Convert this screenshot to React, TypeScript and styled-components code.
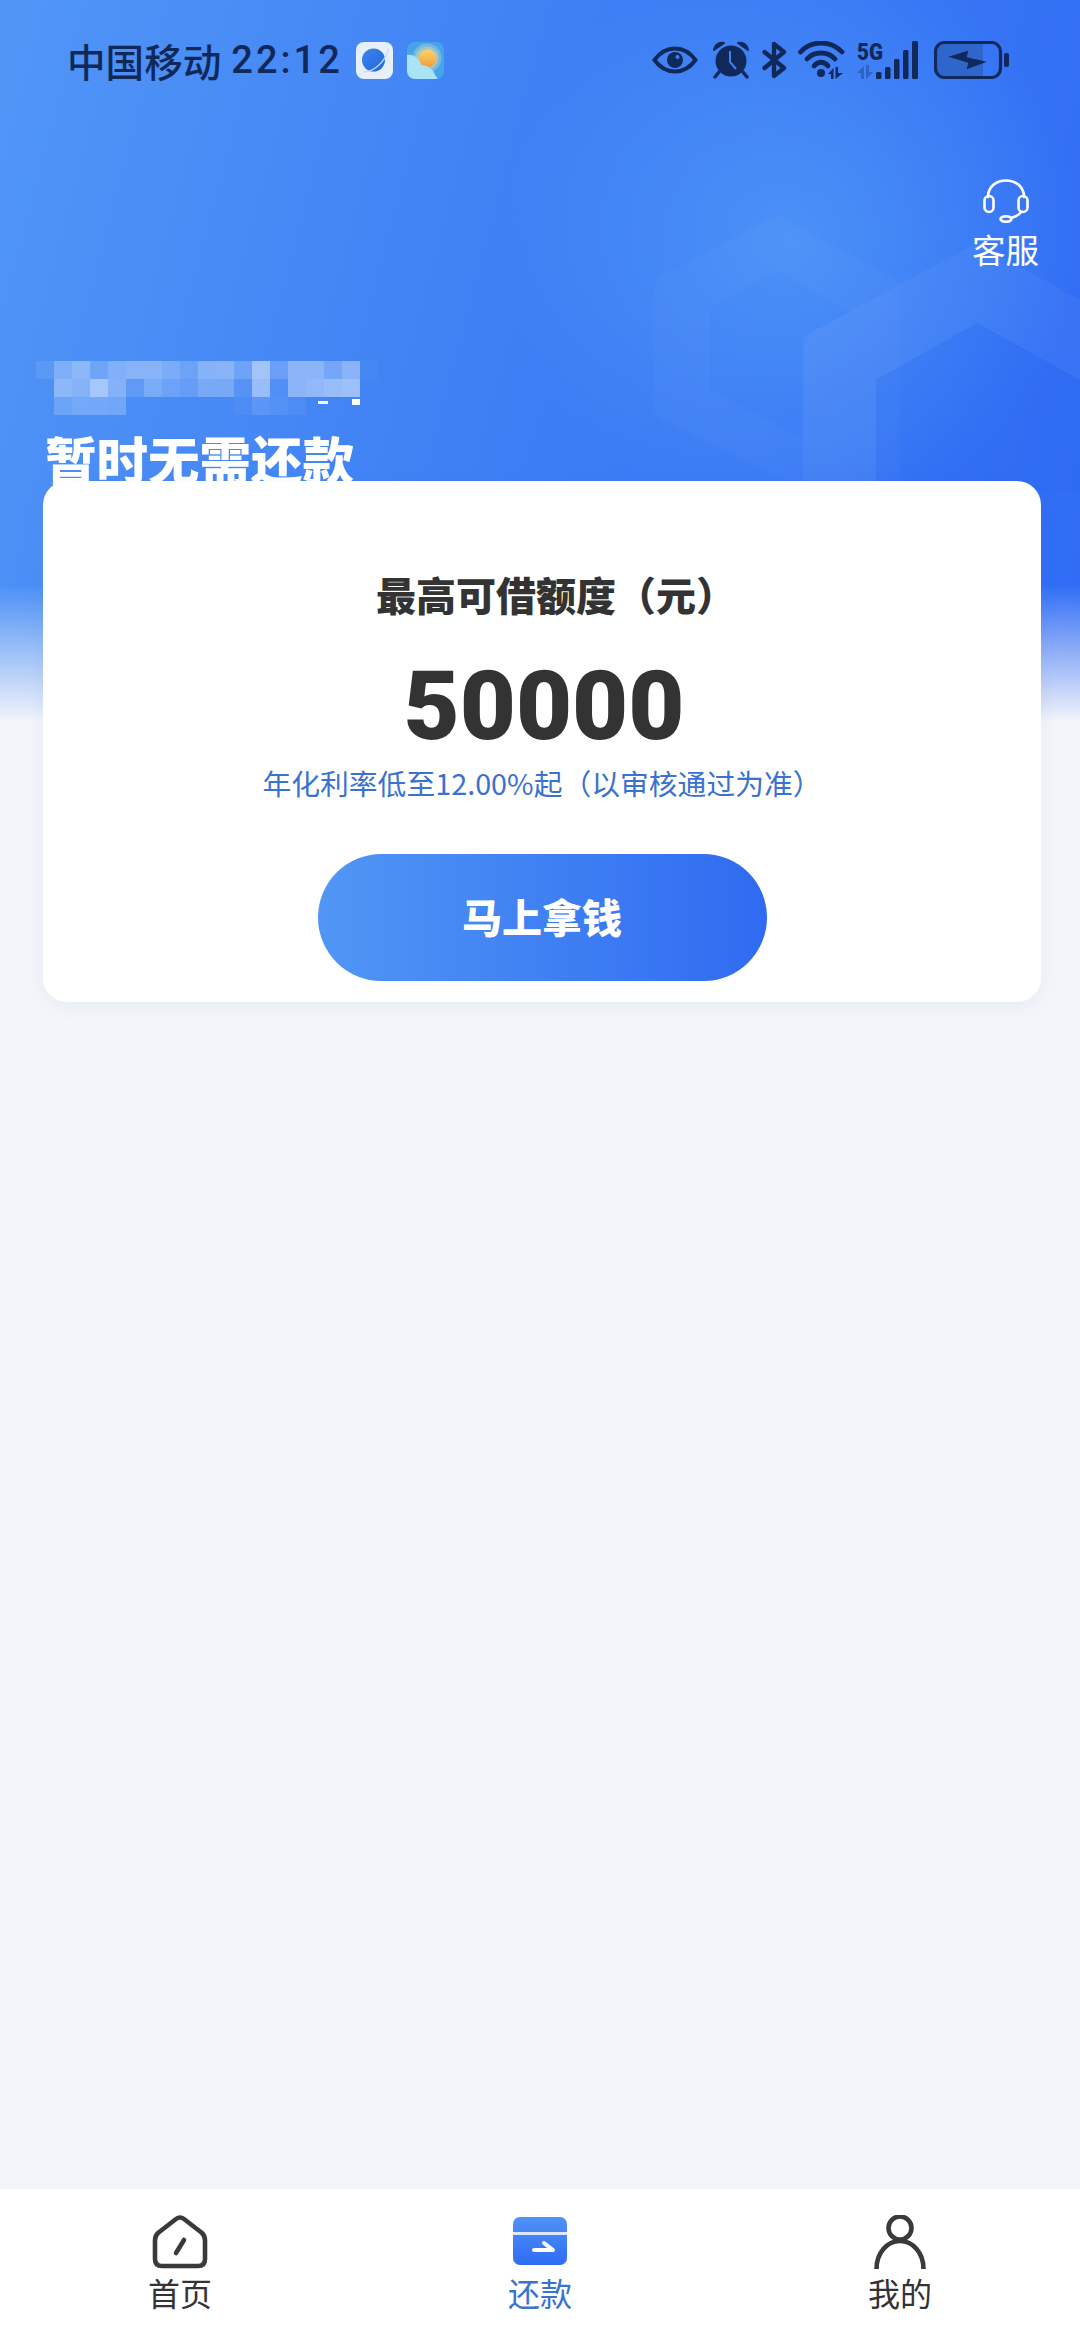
import React, { FunctionComponent } from "react";
import styled, { createGlobalStyle } from "styled-components";

const INK = "#10295a";
const BLUE_TEXT = "#3a72d0";
const CJK = `"Noto Sans CJK SC", "Noto Sans", sans-serif`;

const GlobalStyle = createGlobalStyle`
  html, body {
    margin: 0;
    padding: 0;
    background: #f3f5fa;
  }
  * {
    box-sizing: border-box;
  }
`;

const Page = styled.div`
  position: relative;
  width: 1080px;
  height: 2340px;
  overflow: hidden;
  display: flex;
  flex-direction: column;
  background: #f3f5fa;
  font-family: ${CJK};
`;

const HeroBackdrop = styled.div`
  position: absolute;
  top: 0;
  left: 0;
  width: 1080px;
  height: 740px;
  background:
    radial-gradient(circle at 790px 240px, rgba(80, 152, 248, 0.8) 0, rgba(80, 152, 248, 0) 290px),
    linear-gradient(105deg, #5196f7 0%, #3f80f4 45%, #2f6bf5 100%);
  -webkit-mask-image: linear-gradient(#000 585px, transparent 722px);
  mask-image: linear-gradient(#000 585px, transparent 722px);
`;

const HexArt = styled.svg`
  position: absolute;
  top: 0;
  left: 0;
`;

const StatusBar = styled.div`
  position: relative;
  height: 120px;
  flex: none;
  display: flex;
  align-items: center;
  justify-content: space-between;
  padding: 0 70px 0 67px;
  color: ${INK};
`;

const StatusLeft = styled.div`
  display: flex;
  align-items: center;
`;

const Carrier = styled.span`
  font-size: 38.6px;
  font-weight: 500;
  line-height: 44px;
`;

const Clock = styled.span`
  font-family: Roboto, sans-serif;
  font-size: 38px;
  font-weight: 500;
  letter-spacing: 3px;
  line-height: 44px;
  margin-left: 10px;
  margin-right: 13px;
`;

const AppBadges = styled.div`
  display: flex;
  gap: 14px;
`;

const StatusRight = styled.div`
  display: flex;
  align-items: center;
`;

const StatusIcon = styled.svg<{ $gap?: number }>`
  display: block;
  margin-left: ${(p) => p.$gap ?? 0}px;
`;

const ServiceLink = styled.div`
  position: relative;
  align-self: flex-end;
  margin: 58px 41px 0 0;
  display: flex;
  flex-direction: column;
  align-items: center;
  gap: 6px;
  color: #fff;
  font-size: 33.5px;
  line-height: 40px;
`;

const NameMosaic = styled.div`
  position: relative;
  margin: 92px 0 0 36px;
  display: grid;
  grid-template-columns: repeat(19, 18px);
  grid-auto-rows: 18px;
  width: 342px;
`;

const MosaicCell = styled.div<{ $alpha: number }>`
  background: rgba(255, 255, 255, ${(p) => p.$alpha});
`;

const MosaicFleck = styled.div<{ $left: number; $top: number; $w: number; $h: number }>`
  position: absolute;
  left: ${(p) => p.$left}px;
  top: ${(p) => p.$top}px;
  width: ${(p) => p.$w}px;
  height: ${(p) => p.$h}px;
  background: #fff;
`;

const RepayTitle = styled.h1`
  position: relative;
  margin: 13px 0 0 45px;
  color: #fff;
  font-size: 51.5px;
  font-weight: 900;
  line-height: 60px;
  white-space: nowrap;
`;

/* the card slides up over the bottom of the title, as in the app */
const LoanCard = styled.div`
  position: relative;
  margin: -7px 39px 0 43px;
  padding: 88px 0 21px;
  display: flex;
  flex-direction: column;
  align-items: center;
  background: #fff;
  border-radius: 24px;
  box-shadow: 0 4px 18px rgba(90, 110, 160, 0.08);
`;

const CardHeading = styled.div`
  padding-left: 28px;
  color: #333;
  font-size: 40px;
  font-weight: 900;
  line-height: 50px;
`;

const Amount = styled.div`
  margin-top: 37px;
  padding-left: 4px;
  color: #333;
  font-family: Roboto, sans-serif;
  font-size: 97px;
  font-weight: 900;
  line-height: 100px;
`;

const RateNote = styled.div`
  margin-top: 7px;
  color: ${BLUE_TEXT};
  font-size: 28.8px;
  line-height: 40px;
`;

const TakeMoneyButton = styled.button`
  margin-top: 51px;
  width: 449px;
  height: 127px;
  padding: 0 0 4px;
  border: 0;
  border-radius: 64px;
  background: linear-gradient(90deg, #5196f5 0%, #2f6bf1 100%);
  color: #fff;
  font-family: ${CJK};
  font-size: 40px;
  font-weight: 900;
`;

const Spacer = styled.div`
  flex: 1;
`;

const TabBar = styled.nav`
  flex: none;
  height: 151px;
  display: grid;
  grid-template-columns: repeat(3, 360px);
  background: #fff;
`;

const TabItem = styled.div<{ $active?: boolean }>`
  display: flex;
  flex-direction: column;
  align-items: center;
  padding-top: 26px;
  color: ${(p) => (p.$active ? BLUE_TEXT : "#333")};
  font-size: 32px;
  line-height: 40px;
`;

const TabIconBox = styled.svg`
  display: block;
  margin-bottom: 3px;
`;

const MOSAIC_ROWS = [
  [0.08, 0.28, 0.36, 0.2, 0.3, 0.34, 0.34, 0.28, 0.2, 0.34, 0.36, 0.22, 0.5, 0.2, 0.38, 0.38, 0.27, 0.38, 0.03],
  [0, 0.36, 0.32, 0.5, 0.32, 0.12, 0.27, 0.2, 0.16, 0.27, 0.27, 0.09, 0.45, 0.07, 0.38, 0.42, 0.46, 0.48, 0],
  [0, 0.18, 0.23, 0.23, 0.22, 0, 0, 0, 0, 0, 0, 0.04, 0.12, 0.09, 0.05, 0, 0, 0, 0],
];

const HexBackground: FunctionComponent = () => (
  <HexArt width="1080" height="740" viewBox="0 0 1080 740">
    <path
      fillRule="evenodd"
      fill="rgba(255,255,255,0.025)"
      d="M777 215 L665 274 Q653 280 653 294 L653 405 Q653 415 665 421 L803 490 L900 490 L900 282 Z M777 270 L710 309 L710 390 L803 438 L803 337 L850 312 Z"
    />
    <path
      fillRule="evenodd"
      fill="rgba(255,255,255,0.04)"
      d="M977 243 L815 330 Q803 336 803 350 L803 490 L876 490 L876 380 L977 323 L1080 380 L1080 300 Z"
    />
    <path fill="rgba(30,90,240,0.08)" d="M977 323 L876 380 L876 490 L1080 490 L1080 380 Z" />
  </HexArt>
);

const BrowserBadge: FunctionComponent = () => (
  <svg width="37" height="37" viewBox="0 0 37 37">
    <defs>
      <linearGradient id="planet" x1="0" y1="0" x2="1" y2="1">
        <stop offset="0" stopColor="#3a86ee" />
        <stop offset="1" stopColor="#2265dd" />
      </linearGradient>
    </defs>
    <rect width="37" height="37" rx="8" fill="#e6effa" />
    <circle cx="17.5" cy="18" r="11.5" fill="url(#planet)" />
    <path d="M7 29 C16 31 29 19 32 7 C33 6 33 9 32 11 C28 21 17 32 7 30 Z" fill="#c5d8f4" />
  </svg>
);

const WeatherBadge: FunctionComponent = () => (
  <svg width="37" height="37" viewBox="0 0 37 37">
    <defs>
      <linearGradient id="sun" x1="0" y1="0" x2="0" y2="1">
        <stop offset="0" stopColor="#f8d76a" />
        <stop offset="1" stopColor="#f29a3a" />
      </linearGradient>
      <clipPath id="badge">
        <rect width="37" height="37" rx="8" />
      </clipPath>
    </defs>
    <g clipPath="url(#badge)">
      <rect width="37" height="37" fill="#46a5ea" />
      <circle cx="20" cy="16" r="14.5" fill="#74b8e0" />
      <circle cx="20" cy="16" r="11.5" fill="#a3c8c4" />
      <circle cx="20.5" cy="16.5" r="9" fill="url(#sun)" />
      <path d="M0 13 C7 12 13 17 14 23 C21 23 27 28 28 33 L31 37 L0 37 Z" fill="#a8e4f6" />
    </g>
  </svg>
);

const StatusIcons: FunctionComponent = () => (
  <StatusRight>
    {/* eye */}
    <StatusIcon width="46" height="28" viewBox="0 0 46 28">
      <path d="M2.5 14 C9 5 16 2.5 23 2.5 C30 2.5 37 5 43.5 14 C37 23 30 25.5 23 25.5 C16 25.5 9 23 2.5 14 Z" fill="none" stroke={INK} strokeWidth="4" />
      <circle cx="23" cy="14" r="8" fill={INK} />
      <circle cx="25.5" cy="11" r="2" fill="#3f80f4" />
    </StatusIcon>
    {/* alarm */}
    <StatusIcon $gap={14} width="38" height="38" viewBox="0 0 38 38">
      <circle cx="19" cy="20" r="15.5" fill={INK} />
      <path d="M2 9 C3 3 8 1 12 2 Z M36 9 C35 3 30 1 26 2 Z" fill={INK} stroke={INK} strokeWidth="2" strokeLinejoin="round" />
      <path d="M7 31 L3 36 M31 31 L35 36" stroke={INK} strokeWidth="3.5" strokeLinecap="round" />
      <path d="M18 10 L18 21 L24 28" fill="none" stroke="#3f80f4" strokeWidth="2" />
    </StatusIcon>
    {/* bluetooth */}
    <StatusIcon $gap={12} width="25" height="38" viewBox="0 0 25 38">
      <path d="M2.5 11 L22 27 L12 35 L12 3 L22 11 L2.5 27" fill="none" stroke={INK} strokeWidth="4.4" strokeLinecap="round" strokeLinejoin="round" />
    </StatusIcon>
    {/* wifi */}
    <StatusIcon $gap={11} width="50" height="38" viewBox="0 0 50 38">
      <path d="M2.5 11 C13 -1 33 -1 44 11" fill="none" stroke={INK} strokeWidth="4.8" strokeLinecap="round" />
      <path d="M9 18 C16 10 30 10 37 18" fill="none" stroke={INK} strokeWidth="4.8" strokeLinecap="round" />
      <path d="M16 25 C20 20 26 20 30 25" fill="none" stroke={INK} strokeWidth="4.8" strokeLinecap="round" />
      <circle cx="23" cy="32" r="4" fill={INK} />
      <path d="M35.5 38 L35.5 27 L30 33 L33 33 L33 38 Z M37.5 26 L37.5 38 L45 32 L40 32 L40 26 Z" fill={INK} />
    </StatusIcon>
    {/* 5G + signal */}
    <StatusIcon $gap={9} width="62" height="38" viewBox="0 0 62 38">
      <text x="0" y="19" fontFamily="Roboto, sans-serif" fontWeight="900" fontSize="24" fill={INK} textLength="26" lengthAdjust="spacingAndGlyphs">5G</text>
      <path d="M7 38 L7 25 L0 32 L4 32 L4 38 Z M9 24 L9 38 L16 31 L12 31 L12 24 Z" fill="#2e62c4" />
      <rect x="19" y="31" width="5.5" height="7" rx="1.5" fill={INK} />
      <rect x="28" y="26" width="5.5" height="12" rx="1.5" fill={INK} />
      <rect x="37" y="18" width="5.5" height="20" rx="1.5" fill={INK} />
      <rect x="46" y="9" width="5.5" height="29" rx="1.5" fill={INK} />
      <rect x="55" y="0" width="6" height="38" rx="1.5" fill={INK} />
    </StatusIcon>
    {/* battery */}
    <StatusIcon $gap={15} width="76" height="38" viewBox="0 0 76 38">
      <path d="M10 3 H49 V35 H10 Q3 35 3 28 V10 Q3 3 10 3 Z" fill="#2f66cc" />
      <rect x="1.5" y="1.5" width="65" height="35" rx="9" fill="none" stroke={INK} strokeWidth="3.2" />
      <rect x="70" y="12" width="5" height="14" rx="2" fill={INK} />
      <path d="M14.3 15.7 L34.3 9.7 L32.7 16.3 L52.7 20.7 L32.7 28.3 L34.3 21.7 Z" fill={INK} />
    </StatusIcon>
  </StatusRight>
);

const HeadsetIcon: FunctionComponent = () => (
  <svg width="46" height="45" viewBox="0 0 46 45" fill="none" stroke="#fff" strokeWidth="2.6" strokeLinecap="round">
    <path d="M5 19 C5 -3 41 -3 41 19" />
    <rect x="1.5" y="18" width="9" height="16" rx="4.5" />
    <rect x="35.5" y="18" width="9" height="16" rx="4.5" />
    <path d="M38 34 C36 38 31 39 28 40" />
    <ellipse cx="23" cy="41" rx="5.5" ry="2.8" />
  </svg>
);

const HomeIcon: FunctionComponent = () => (
  <TabIconBox width="56" height="54" viewBox="0 0 56 54" fill="none" stroke="#3a3a3a" strokeWidth="4.6" strokeLinecap="round" strokeLinejoin="round">
    <path d="M24 4 Q28 1 32 4 L50 18 Q53 21 53 25 V44 Q53 51 46 51 H10 Q3 51 3 44 V25 Q3 21 6 18 Z" />
    <path d="M24 38 L32 25" />
  </TabIconBox>
);

const RepayIcon: FunctionComponent = () => (
  <TabIconBox width="56" height="54" viewBox="0 0 56 54">
    <defs>
      <linearGradient id="repay" x1="0" y1="0" x2="0" y2="1">
        <stop offset="0" stopColor="#4f92f6" />
        <stop offset="1" stopColor="#2f6cf5" />
      </linearGradient>
    </defs>
    <rect x="1" y="2" width="54" height="48" rx="7" fill="url(#repay)" />
    <rect x="1" y="17" width="54" height="3" fill="#dbe8fd" />
    <path d="M22 35 H41 L32 28" fill="none" stroke="#fff" strokeWidth="4" strokeLinecap="round" strokeLinejoin="round" />
  </TabIconBox>
);

const PersonIcon: FunctionComponent = () => (
  <TabIconBox width="56" height="54" viewBox="0 0 56 54" fill="none" stroke="#3a3a3a" strokeWidth="4.6">
    <circle cx="28" cy="13" r="11.5" />
    <path d="M4.5 54 C4.5 38 15 26 28 26 C41 26 51.5 38 51.5 54" />
  </TabIconBox>
);

const App: FunctionComponent = () => {
  return (
    <Page>
      <GlobalStyle />
      <HeroBackdrop>
        <HexBackground />
      </HeroBackdrop>
      <StatusBar>
        <StatusLeft>
          <Carrier>中国移动</Carrier>
          <Clock>22:12</Clock>
          <AppBadges>
            <BrowserBadge />
            <WeatherBadge />
          </AppBadges>
        </StatusLeft>
        <StatusIcons />
      </StatusBar>
      <ServiceLink>
        <HeadsetIcon />
        客服
      </ServiceLink>
      <NameMosaic>
        {MOSAIC_ROWS.flat().map((alpha, i) => (
          <MosaicCell key={i} $alpha={alpha} />
        ))}
        <MosaicFleck $left={282} $top={40} $w={10} $h={3} />
        <MosaicFleck $left={316} $top={38} $w={8} $h={6} />
      </NameMosaic>
      <RepayTitle>暂时无需还款</RepayTitle>
      <LoanCard>
        <CardHeading>最高可借额度（元）</CardHeading>
        <Amount>50000</Amount>
        <RateNote>年化利率低至12.00%起（以审核通过为准）</RateNote>
        <TakeMoneyButton>马上拿钱</TakeMoneyButton>
      </LoanCard>
      <Spacer />
      <TabBar>
        <TabItem>
          <HomeIcon />
          首页
        </TabItem>
        <TabItem $active>
          <RepayIcon />
          还款
        </TabItem>
        <TabItem>
          <PersonIcon />
          我的
        </TabItem>
      </TabBar>
    </Page>
  );
};

export default App;
